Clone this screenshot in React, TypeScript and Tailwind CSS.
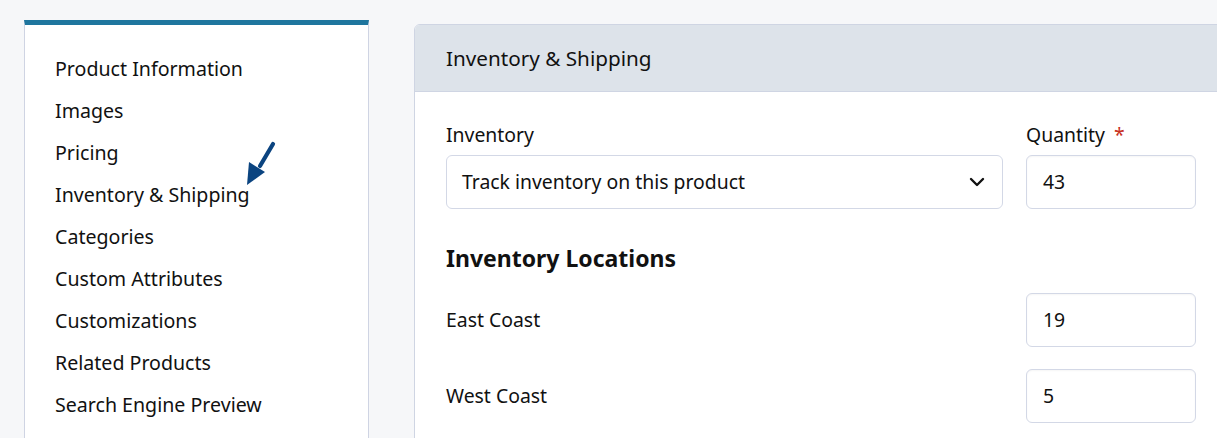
import { ChevronDown } from "lucide-react";

const navItems = [
  "Product Information",
  "Images",
  "Pricing",
  "Inventory & Shipping",
  "Categories",
  "Custom Attributes",
  "Customizations",
  "Related Products",
  "Search Engine Preview",
];

function PointerArrow() {
  return (
    <svg width="34" height="50" viewBox="0 0 34 50" className="absolute left-[242px] top-[139px]" aria-hidden="true">
      <line x1="31" y1="5" x2="18" y2="27" stroke="#0b4480" strokeWidth="4.2" strokeLinecap="round" />
      <polygon points="7,23 23,33 5,46" fill="#0b4480" />
    </svg>
  );
}

function NumberBox({ value }: { value: string }) {
  return (
    <div className="flex h-[54px] w-[170px] items-center rounded-md border border-[#d3d8e6] bg-white px-4 text-[19.4px] text-[#111] shadow-[inset_0_1px_2px_rgba(0,0,0,0.04)]">
      {value}
    </div>
  );
}

export default function App() {
  return (
    <div className="h-[438px] w-full overflow-hidden bg-[#f6f7f9] font-['Noto_Sans',sans-serif] text-[#111]">
      <div className="relative flex w-[1240px] items-start pl-[24px] pt-[20px]">
        <aside className="h-[460px] w-[345px] shrink-0 border border-t-[5px] border-[#cfd4e3] border-t-[#1f769e] bg-white pl-[30px] pt-[23px]">
          <ul className="flex flex-col">
            {navItems.map((item) => (
              <li key={item} className="flex h-[42px] items-center text-[19.6px]">
                {item}
              </li>
            ))}
          </ul>
        </aside>
        <PointerArrow />

        <section className="ml-[45px] mt-[4px] w-[814px] shrink-0 overflow-hidden rounded-md border border-[#cfd5e3] bg-white">
          <header className="flex h-[67px] items-center border-b border-[#cfd5e3] bg-[#dde3ea] pl-[31px] pt-px text-[20.7px]">
            Inventory &amp; Shipping
          </header>
          <div className="px-[31px] pt-[30px] pb-8">
            <div className="grid grid-cols-[1fr_170px] gap-x-[23px]">
              <div>
                <div className="mb-[7px] text-[19.4px] leading-[26px]">Inventory</div>
                <div className="flex h-[54px] items-center justify-between rounded-md border border-[#d3d8e6] bg-white pl-[15px] pr-[13px] text-[19.4px]">
                  <span>Track inventory on this product</span>
                  <ChevronDown size={24} strokeWidth={2.4} className="text-[#111]" />
                </div>
              </div>
              <div>
                <div className="mb-[7px] text-[19.4px] leading-[26px]">
                  Quantity <span className="ml-1 text-[#c8321f]">*</span>
                </div>
                <NumberBox value="43" />
              </div>
            </div>

            <h2 className="mt-[34px] text-[23px] font-bold leading-[30px]">Inventory Locations</h2>

            <div className="mt-[20px] flex flex-col gap-[22px]">
              <div className="flex items-center justify-between">
                <span className="text-[19.4px]">East Coast</span>
                <NumberBox value="19" />
              </div>
              <div className="flex items-center justify-between">
                <span className="text-[19.4px]">West Coast</span>
                <NumberBox value="5" />
              </div>
            </div>
          </div>
        </section>
      </div>
    </div>
  );
}
